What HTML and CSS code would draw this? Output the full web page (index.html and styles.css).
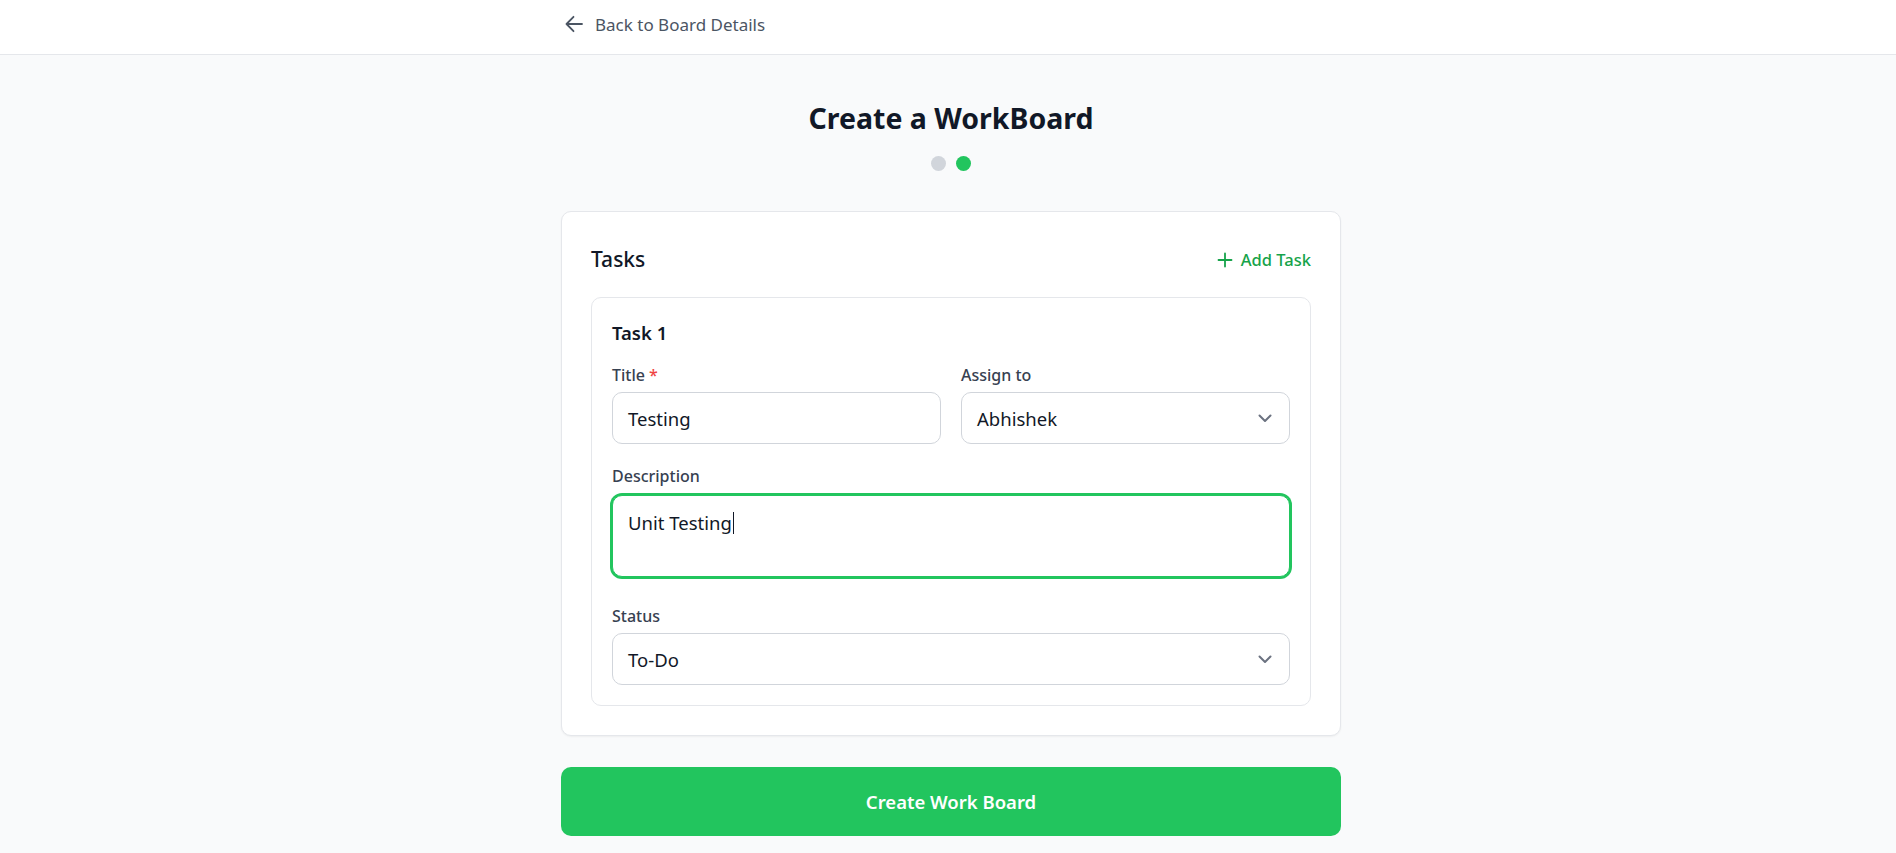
FILE: index.html
```html
<!DOCTYPE html>
<html lang="en">
<head>
<meta charset="utf-8">
<title>Create a WorkBoard</title>
<link rel="stylesheet" href="styles.css">
</head>
<body>
<header class="topbar">
  <div class="wrap topbar-inner">
    <a class="back-link" href="#">
      <svg class="back-icon" width="18" height="18" viewBox="0 0 18 18" fill="none" stroke="currentColor" stroke-width="1.8" stroke-linecap="round" stroke-linejoin="round"><path d="M8.5 1.8 1.5 9l7 7.2M1.5 9h15.5"/></svg>
      <span>Back to Board Details</span>
    </a>
  </div>
</header>
<main class="wrap main">
  <h1 class="page-title">Create a WorkBoard</h1>
  <div class="steps">
    <span class="dot"></span>
    <span class="dot dot-active"></span>
  </div>
  <section class="card">
    <div class="card-head">
      <h2 class="card-title">Tasks</h2>
      <a class="add-task" href="#">
        <svg width="16" height="16" viewBox="0 0 16 16" fill="none" stroke="currentColor" stroke-width="1.8" stroke-linecap="round"><path d="M8 1.5v13M1.5 8h13"/></svg>
        <span>Add Task</span>
      </a>
    </div>
    <div class="task">
      <h3 class="task-title">Task 1</h3>
      <div class="row-2">
        <div class="field">
          <label class="label">Title <span class="req">*</span></label>
          <div class="control">Testing</div>
        </div>
        <div class="field">
          <label class="label">Assign to</label>
          <div class="control select">
            <span>Abhishek</span>
            <svg class="chev" width="14" height="9" viewBox="0 0 14 9" fill="none" stroke="currentColor" stroke-width="2" stroke-linecap="round" stroke-linejoin="round"><path d="M1.5 1.5 7 7l5.5-5.5"/></svg>
          </div>
        </div>
      </div>
      <div class="field field-desc">
        <label class="label">Description</label>
        <div class="control textarea focused">Unit Testing<span class="caret"></span></div>
      </div>
      <div class="field field-status">
        <label class="label">Status</label>
        <div class="control select">
          <span>To-Do</span>
          <svg class="chev" width="14" height="9" viewBox="0 0 14 9" fill="none" stroke="currentColor" stroke-width="2" stroke-linecap="round" stroke-linejoin="round"><path d="M1.5 1.5 7 7l5.5-5.5"/></svg>
        </div>
      </div>
    </div>
  </section>
  <button class="submit" type="button">Create Work Board</button>
</main>
</body>
</html>
```

FILE: styles.css
```css
* { box-sizing: border-box; }
html, body { margin: 0; padding: 0; }
body {
  background: #f9fafb;
  font-family: "Noto Sans", "Open Sans", sans-serif;
  color: #111827;
}
.wrap {
  width: 780px;
  margin-left: calc(50% - 387px);
}
.topbar {
  background: #ffffff;
  border-bottom: 1px solid #e5e7eb;
}
.topbar-inner {
  height: 54px;
  display: flex;
  align-items: center;
}
.back-link {
  display: flex;
  align-items: center;
  gap: 12px;
  color: #4b5563;
  text-decoration: none;
  font-size: 17px;
  line-height: 25px;
  margin-top: -6px;
  padding-left: 4px;
}
.back-icon { flex: none; }
.main {
  padding-top: 43px;
}
.page-title {
  margin: 0;
  text-align: center;
  font-size: 28.5px;
  line-height: 40px;
  font-weight: 700;
  color: #111827;
}
.steps {
  display: flex;
  justify-content: center;
  gap: 10px;
  margin-top: 18px;
  margin-bottom: 40px;
}
.dot {
  width: 15px;
  height: 15px;
  border-radius: 50%;
  background: #d1d5db;
}
.dot-active { background: #22c55e; }
.card {
  background: #ffffff;
  border: 1px solid #e5e7eb;
  border-radius: 10px;
  box-shadow: 0 1px 2px rgba(0,0,0,0.05);
  padding: 29px;
}
.card-head {
  display: flex;
  justify-content: space-between;
  align-items: center;
  height: 35px;
  margin-bottom: 21px;
}
.card-title {
  margin: 0;
  font-size: 21px;
  font-weight: 500;
  color: #111827;
}
.add-task {
  display: flex;
  align-items: center;
  gap: 8px;
  color: #16a34a;
  text-decoration: none;
  font-size: 16.5px;
  font-weight: 500;
  margin-top: 2px;
}
.task {
  border: 1px solid #e5e7eb;
  border-radius: 10px;
  padding: 20px;
}
.task-title {
  margin: 0 0 15px;
  font-size: 18.5px;
  line-height: 30px;
  font-weight: 600;
  color: #111827;
}
.row-2 {
  display: grid;
  grid-template-columns: 1fr 1fr;
  gap: 20px;
}
.field { display: flex; flex-direction: column; }
.label {
  font-size: 16px;
  line-height: 25px;
  font-weight: 500;
  color: #374151;
  margin-bottom: 4px;
}
.req { color: #ef4444; }
.control {
  height: 52px;
  border: 1px solid #d1d5db;
  border-radius: 10px;
  background: #ffffff;
  padding: 0 15px;
  display: flex;
  align-items: center;
  font-size: 18.5px;
  color: #111827;
}
.select { justify-content: space-between; }
.chev { color: #6b7280; margin-right: 2px; }
.field-desc { margin-top: 20px; }
.label + .textarea { margin-top: 2px; }
.textarea {
  height: 82px;
  align-items: flex-start;
  padding-top: 12px;
  line-height: 30px;
  border: 1px solid #22c55e;
  box-shadow: 0 0 0 2px #22c55e;
}
.caret {
  display: inline-block;
  width: 1px;
  height: 22px;
  background: #111827;
  margin-top: 4px;
  margin-left: 1px;
}
.field-status { margin-top: 27px; }
.submit {
  display: block;
  width: 100%;
  margin-top: 31px;
  height: 69px;
  border: none;
  border-radius: 10px;
  background: #22c55e;
  color: #ffffff;
  font-family: inherit;
  font-size: 18.5px;
  font-weight: 600;
}
```
